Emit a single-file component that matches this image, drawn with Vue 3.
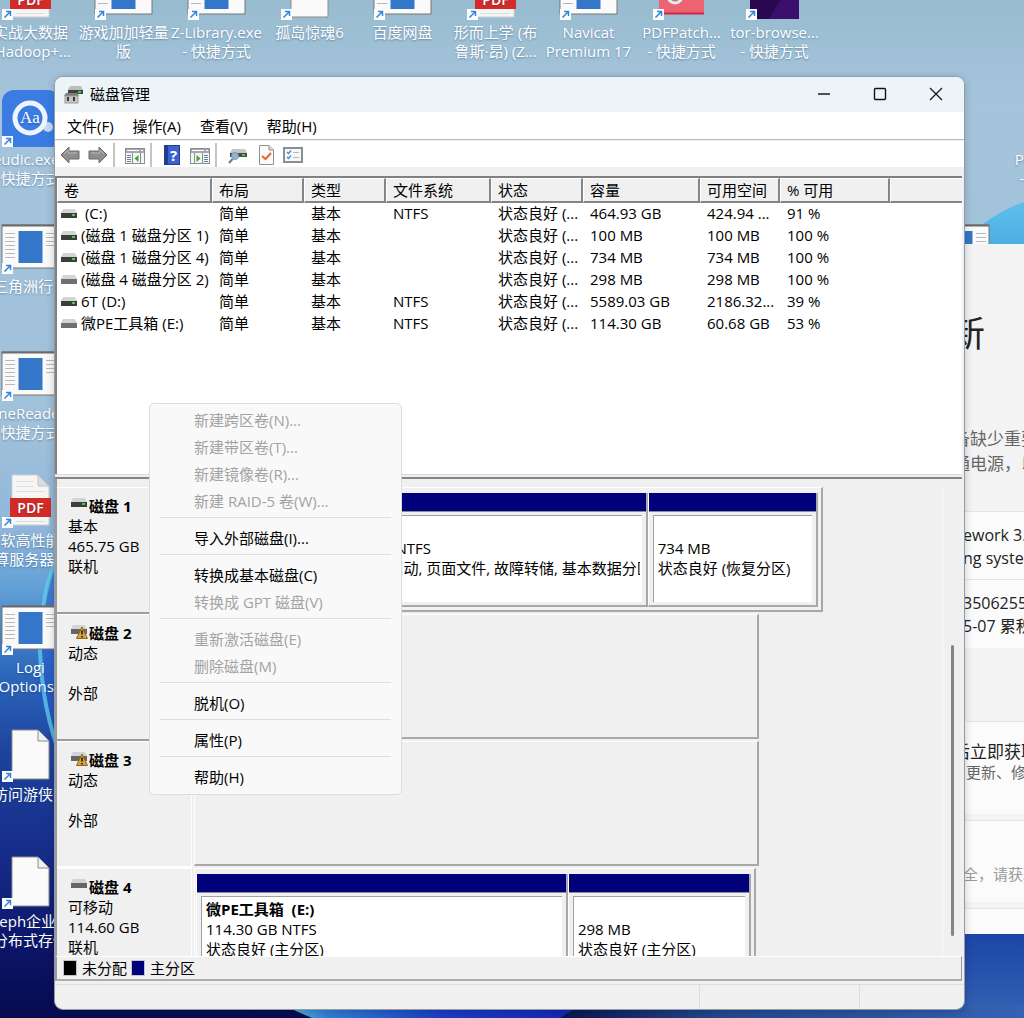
<template>
  <div class="desktop">
    <svg class="wallpaper" viewBox="0 0 1024 1018" preserveAspectRatio="none" aria-hidden="true">
      <defs>
        <linearGradient id="sky" x1="0" y1="0" x2="0" y2="1">
          <stop offset="0" stop-color="#98bccf" />
          <stop offset="0.1" stop-color="#a5c4dc" />
          <stop offset="0.42" stop-color="#a0c1da" />
          <stop offset="0.52" stop-color="#8fb6da" />
          <stop offset="0.58" stop-color="#5f9ed6" />
          <stop offset="0.66" stop-color="#2d68bb" />
          <stop offset="0.74" stop-color="#1c439e" />
          <stop offset="0.85" stop-color="#152a86" />
          <stop offset="0.93" stop-color="#0c1568" />
          <stop offset="1" stop-color="#060b4e" />
        </linearGradient>
        <linearGradient id="bloom" x1="0" y1="0" x2="0" y2="1">
          <stop offset="0" stop-color="#5cc0ea" />
          <stop offset="0.1" stop-color="#3f9ddd" />
          <stop offset="0.9" stop-color="#1c46a8" />
          <stop offset="1" stop-color="#3562b4" />
        </linearGradient>
        <linearGradient id="floor" x1="0" y1="0" x2="1" y2="0">
          <stop offset="0" stop-color="#5cc5e6" />
          <stop offset="0.15" stop-color="#2f7fd6" />
          <stop offset="0.5" stop-color="#1b3fc4" />
          <stop offset="1" stop-color="#1422b4" />
        </linearGradient>
        <linearGradient id="corner" x1="0" y1="0" x2="1" y2="0">
          <stop offset="0" stop-color="#0b1550" />
          <stop offset="0.35" stop-color="#234a90" />
          <stop offset="1" stop-color="#3562b4" />
        </linearGradient>
      </defs>
      <rect width="1024" height="1018" fill="url(#sky)" />
      <path d="M940 262 Q985 215 1024 202 V1018 H940 Z" fill="url(#bloom)" />
      <path d="M36 690 L44 600 L55 560 V740 Z" fill="#2456cc" opacity="0.5" />
      <path d="M62 545 Q40 590 40 650 Q42 710 62 760" fill="none" stroke="#62d2ea" stroke-width="4" opacity="0.75" />
      <path d="M280 1004 H600 L570 1018 H312 Z" fill="url(#floor)" />
      <path d="M582 1004 H1024 V1018 H560 Z" fill="url(#corner)" />
    </svg>

    <div class="shortcuts">
      <a
        v-for="item in shortcuts"
        :key="item.id"
        href="#"
        class="shortcut"
        :style="{ gridColumn: item.col, gridRow: item.row }"
      >
        <svg class="shortcut-icon" viewBox="0 0 59 60" aria-hidden="true">
          <g v-if="item.icon === 'app'">
            <rect x="1" y="11" width="57" height="43" fill="#fafafa" stroke="#777" />
            <path d="M1 11.5 H58" stroke="#6b6b6b" stroke-width="2" />
            <rect x="17.500" y="17" width="24" height="32" fill="#3476c8" />
            <path
              d="M4 19.500H14M4 23.500H14M4 27.500H14M4 31.500H14M4 35.500H14M4 39.500H14M4 43.500H14M45 19.500H55M45 23.500H55M45 27.500H55M45 31.500H55"
              stroke="#b9b9b9"
            />
          </g>
          <g v-else-if="item.icon === 'pdf'">
            <path d="M11 7 H37 L48 18 V57 H11 Z" fill="#f6f6f6" stroke="#cfcfcf" />
            <path d="M37 7 V18 H48 Z" fill="#dcdcdc" stroke="#c4c4c4" />
            <path d="M15 13.500H33M15 18.500H33M15 23.500H44M15 53.500H44" stroke="#dedede" />
            <rect x="9" y="30" width="41" height="19" fill="#d52b27" />
            <text x="29.500" y="45" text-anchor="middle" class="pdf-text">PDF</text>
          </g>
          <g v-else-if="item.icon === 'file'">
            <path d="M11 8 H37 L48 19 V57 H11 Z" fill="#fafafa" stroke="#8d8d8d" />
            <path d="M37 8 V19 H48" fill="#f0f0f0" stroke="#8d8d8d" />
          </g>
          <g v-else-if="item.icon === 'dict'">
            <rect x="1" y="3" width="58" height="58" rx="12" fill="#3a7ce2" />
            <path d="M40 36 L47 40" stroke="#d3e4fb" stroke-width="7" />
            <circle cx="47" cy="40" r="5" fill="#c3daf8" />
            <circle cx="29" cy="31" r="15" fill="#3a7ce2" stroke="#eef5ff" stroke-width="5" />
            <text x="29" y="36" text-anchor="middle" class="dict-text">Aa</text>
          </g>
          <g v-else-if="item.icon === 'patch'">
            <rect x="7" y="8" width="45" height="46" rx="2" fill="#ee6372" />
            <path d="M7 53.500 H52" stroke="#cc2743" stroke-width="2" />
            <circle cx="23" cy="36" r="7" fill="none" stroke="#d9f2f4" stroke-width="3" />
          </g>
          <g v-else>
            <rect x="5" y="8" width="49" height="51" fill="#2a0850" />
            <path d="M54 8 V59 H24 Z" fill="#3a0f6c" />
          </g>
          <rect x="1" y="49" width="11" height="11" fill="#fdfdfd" />
          <path d="M3.500 57.500 L9 52 M5 51.500 H9.500 V56" fill="none" stroke="#2f86dc" stroke-width="1.500" />
        </svg>
        <span v-for="line in item.lines" :key="line" class="shortcut-line">{{ line }}</span>
      </a>
    </div>

    <section class="update-window">
      <h2>新</h2>
      <div class="update-notice">
        <p>备缺少重要更新。</p>
        <p>通电源，以便继续</p>
      </div>
      <div class="update-card first">
        <p>ework 3.5</p>
        <p>ng system</p>
      </div>
      <div class="update-card second">
        <p>3506255)</p>
        <p>5-07 累积更新</p>
      </div>
      <div class="update-card third">
        <h3>后立即获取</h3>
        <p class="muted">更新、修复</p>
      </div>
      <div class="update-card fourth">
        <p class="faint">全，请获取</p>
      </div>
      <div class="update-card rest"></div>
    </section>

    <main class="window">
      <header class="title-bar">
        <svg class="title-icon" viewBox="0 0 20 20" aria-hidden="true">
          <path d="M6 2 H17 L19 6 H4 Z" fill="#bdbdbd" />
          <rect x="4" y="6" width="15" height="4" fill="#3c4240" />
          <rect x="14" y="7" width="3" height="2" fill="#3fd13f" />
          <path d="M2 9 H13 L15 12 H0 Z" fill="#7d7d7d" />
          <rect x="1" y="12" width="13" height="7" fill="#c4c4c4" stroke="#9a9a9a" />
          <rect x="3" y="13" width="2" height="4" fill="#3a3a3a" />
          <rect x="9" y="13" width="2" height="4" fill="#3a3a3a" />
        </svg>
        <h1>磁盘管理</h1>
        <button class="caption" aria-label="最小化">
          <svg viewBox="0 0 14 14"><path d="M1 7 H13" stroke="#1a1a1a" stroke-width="1.300" /></svg>
        </button>
        <button class="caption" aria-label="最大化">
          <svg viewBox="0 0 14 14"><rect x="1.500" y="1.500" width="11" height="11" rx="1" fill="none" stroke="#111" stroke-width="1.400" /></svg>
        </button>
        <button class="caption" aria-label="关闭">
          <svg viewBox="0 0 14 14"><path d="M1 1 L13 13 M13 1 L1 13" stroke="#1a1a1a" stroke-width="1.300" /></svg>
        </button>
      </header>

      <nav class="menu-bar">
        <button v-for="name in menus" :key="name">{{ name }}</button>
      </nav>

      <div class="toolbar">
        <button aria-label="后退">
          <svg viewBox="0 0 20 20"><path d="M1 10 L9 2 V6 H19 V14 H9 V18 Z" fill="#8e8e8e" stroke="#6a6a6a" /><path d="M4 9 L8 5 V8 H17" fill="none" stroke="#b5b5b5" /></svg>
        </button>
        <button aria-label="前进">
          <svg viewBox="0 0 20 20"><path d="M19 10 L11 2 V6 H1 V14 H11 V18 Z" fill="#8e8e8e" stroke="#6a6a6a" /><path d="M16 9 L12 5 V8 H3" fill="none" stroke="#b5b5b5" /></svg>
        </button>
        <span class="divider"></span>
        <button aria-label="显示树">
          <svg viewBox="0 0 20 20">
            <rect x="0.500" y="3.500" width="19" height="15" fill="#f5f5f5" stroke="#8a8f96" />
            <rect x="1" y="4" width="18" height="4" fill="#a3a8ae" />
            <path d="M2 5.500H14M16 5.500H18" stroke="#fff" />
            <path d="M7.500 8V18M15.500 8V18" stroke="#8a8f96" />
            <path d="M2 10.500H6M2 12.500H6M2 14.500H6M2 16.500H6" stroke="#5f82ad" />
            <path d="M13.500 10 V17 L9.500 13.500 Z" fill="#43a52c" />
          </svg>
        </button>
        <span class="divider"></span>
        <button aria-label="帮助">
          <svg viewBox="0 0 20 20">
            <rect x="2.500" y="0.500" width="15" height="19" fill="#3d62cf" stroke="#27407f" />
            <rect x="3" y="1" width="3" height="18" fill="#223c94" />
            <text x="11.500" y="16" text-anchor="middle" class="help-mark">?</text>
          </svg>
        </button>
        <button aria-label="操作窗格">
          <svg viewBox="0 0 20 20">
            <rect x="0.500" y="3.500" width="19" height="15" fill="#f5f5f5" stroke="#8a8f96" />
            <rect x="1" y="4" width="18" height="4" fill="#a3a8ae" />
            <path d="M2 5.500H14M16 5.500H18" stroke="#fff" />
            <path d="M4.500 8V18M12.500 8V18" stroke="#8a8f96" />
            <path d="M14 10.500H18M14 12.500H18M14 14.500H18M14 16.500H18" stroke="#5f82ad" />
            <path d="M6.500 10 V17 L10.500 13.500 Z" fill="#43a52c" />
          </svg>
        </button>
        <span class="divider"></span>
        <button aria-label="重新扫描磁盘">
          <svg viewBox="0 0 20 20">
            <path d="M5 4 H18 L20 8 H3 Z" fill="#c6c6c6" />
            <rect x="3" y="8" width="17" height="4" fill="#454c4a" />
            <rect x="15" y="9" width="3" height="2" fill="#3fd13f" />
            <circle cx="8" cy="11" r="3.500" fill="#8fb6d4" stroke="#7d97ab" />
            <path d="M5.500 14 L2 18" stroke="#6f7a84" stroke-width="2" />
          </svg>
        </button>
        <button aria-label="属性">
          <svg viewBox="0 0 20 20">
            <path d="M4.500 0.500 H14 L18.500 5 V19.500 H4.500 Z" fill="#fbfbfb" stroke="#8f8f8f" />
            <path d="M14 0.500 V5 H18.500" fill="#ddd" stroke="#8f8f8f" />
            <path d="M7 11 L10.500 14 L16 8" fill="none" stroke="#e8672a" stroke-width="2" />
          </svg>
        </button>
        <button aria-label="设置">
          <svg viewBox="0 0 20 20">
            <rect x="1" y="3" width="18" height="14" fill="#f7f7f7" stroke="#8a8f96" stroke-width="2" />
            <path d="M4 7 L5.500 8.500 L8 5.500 M4 12 L5.500 13.500 L8 10.500" fill="none" stroke="#3d8ad0" stroke-width="1.300" />
            <path d="M10 7.500H16M10 12.500H16" stroke="#b4b9bf" />
          </svg>
        </button>
      </div>

      <div class="volume-pane">
        <table>
          <colgroup>
            <col v-for="(col, i) in columns" :key="i" :class="'col-' + i">
            <col>
          </colgroup>
          <thead>
            <tr>
              <th v-for="col in columns" :key="col">{{ col }}</th>
              <th></th>
            </tr>
          </thead>
          <tbody>
            <tr v-for="vol in volumes" :key="vol.cells[0]">
              <td v-for="(cell, i) in vol.cells" :key="i" :class="{ name: i === 0 }">
                <svg v-if="i === 0" class="drive" viewBox="0 0 16 10" aria-hidden="true">
                  <path d="M2 0 H14 L16 4 H0 Z" fill="#d2d4d6" />
                  <rect y="4" width="16" height="5" :fill="vol.removable ? '#707070' : '#3a3f3d'" />
                  <rect v-if="!vol.removable" x="11" y="5" width="3" height="2" fill="#3fd13f" />
                </svg>{{ cell }}
              </td>
              <td></td>
            </tr>
          </tbody>
        </table>
      </div>

      <div class="splitter"></div>

      <div class="disk-pane">
        <div class="disk-list">
          <div v-for="disk in disks" :key="disk.name" class="disk-row">
            <div class="disk-head">
              <strong>
                <svg class="drive" viewBox="0 0 16 14" aria-hidden="true">
                  <path d="M2 0 H14 L16 4 H0 Z" fill="#d2d4d6" />
                  <rect y="4" width="16" height="5" :fill="disk.kind === 'fixed' ? '#3a3f3d' : '#666'" />
                  <rect v-if="disk.kind === 'fixed'" x="11" y="5" width="3" height="2" fill="#3fd13f" />
                  <g v-if="disk.kind === 'foreign'">
                    <path d="M11 2 L16.500 13.500 H5.500 Z" fill="#dba23c" stroke="#8f641c" />
                    <path d="M11 5.500 V9.500 M11 11 V12.500" stroke="#1c1200" stroke-width="1.500" />
                  </g>
                </svg>{{ disk.name }}
              </strong>
              <span v-for="(line, i) in disk.info" :key="i">{{ line }}</span>
            </div>
            <div class="disk-graph" :style="{ width: disk.width + 'px' }">
              <div
                v-for="(part, i) in disk.parts"
                :key="i"
                class="partition"
                :style="{ flexGrow: part.share }"
              >
                <div class="bar"></div>
                <div class="partition-body">
                  <strong>{{ part.label }}</strong>
                  <span>{{ part.size }}</span>
                  <span>{{ part.status }}</span>
                </div>
              </div>
            </div>
          </div>
        </div>
        <div class="scroll-track"><div class="scroll-thumb"></div></div>
      </div>

      <div class="legend">
        <span class="swatch unallocated"></span>未分配
        <span class="swatch primary"></span>主分区
      </div>
      <footer class="status-bar">
        <span></span><span></span><span></span>
      </footer>
    </main>

    <div class="context-menu" role="menu">
      <template v-for="(group, g) in contextMenu" :key="g">
        <hr v-if="g > 0">
        <button v-for="item in group" :key="item.text" role="menuitem" :disabled="item.disabled">
          {{ item.text }}
        </button>
      </template>
    </div>
  </div>
</template>

<script setup>
const shortcuts = [
  { id: 1, col: 1, row: 1, icon: 'pdf', lines: ['实战大数据', '(Hadoop+...'] },
  { id: 2, col: 2, row: 1, icon: 'app', lines: ['游戏加加轻量', '版'] },
  { id: 3, col: 3, row: 1, icon: 'app', lines: ['Z-Library.exe', '- 快捷方式'] },
  { id: 4, col: 4, row: 1, icon: 'file', lines: ['孤岛惊魂6'] },
  { id: 5, col: 5, row: 1, icon: 'app', lines: ['百度网盘'] },
  { id: 6, col: 6, row: 1, icon: 'pdf', lines: ['形而上学 (布', '鲁斯·昂) (Z...'] },
  { id: 7, col: 7, row: 1, icon: 'app', lines: ['Navicat', 'Premium 17'] },
  { id: 8, col: 8, row: 1, icon: 'patch', lines: ['PDFPatch...', '- 快捷方式'] },
  { id: 9, col: 9, row: 1, icon: 'tor', lines: ['tor-browse...', '- 快捷方式'] },
  { id: 10, col: 1, row: 2, icon: 'dict', lines: ['eudic.exe -', '快捷方式'] },
  { id: 11, col: 1, row: 3, icon: 'app', lines: ['三角洲行动'] },
  { id: 12, col: 1, row: 4, icon: 'app', lines: ['OneReader -', '快捷方式'] },
  { id: 13, col: 1, row: 5, icon: 'pdf', lines: ['微软高性能计', '算服务器 2'] },
  { id: 14, col: 1, row: 6, icon: 'app', lines: ['Logi', 'Options+'] },
  { id: 15, col: 1, row: 7, icon: 'file', lines: ['访问游侠网'] },
  { id: 16, col: 1, row: 8, icon: 'file', lines: ['Ceph企业级', '分布式存储'] },
  { id: 17, col: 12, row: 2, icon: 'file', lines: ['Person.exe', '- 快捷方式'] },
  { id: 18, col: 11, row: 3, icon: 'app', lines: [] }
]

const menus = ['文件(F)', '操作(A)', '查看(V)', '帮助(H)']

const columns = ['卷', '布局', '类型', '文件系统', '状态', '容量', '可用空间', '% 可用']

const volumes = [
  { cells: [' (C:)', '简单', '基本', 'NTFS', '状态良好 (...', '464.93 GB', '424.94 ...', '91 %'] },
  { cells: ['(磁盘 1 磁盘分区 1)', '简单', '基本', '', '状态良好 (...', '100 MB', '100 MB', '100 %'] },
  { cells: ['(磁盘 1 磁盘分区 4)', '简单', '基本', '', '状态良好 (...', '734 MB', '734 MB', '100 %'] },
  { removable: true, cells: ['(磁盘 4 磁盘分区 2)', '简单', '基本', '', '状态良好 (...', '298 MB', '298 MB', '100 %'] },
  { cells: ['6T (D:)', '简单', '基本', 'NTFS', '状态良好 (...', '5589.03 GB', '2186.32...', '39 %'] },
  { removable: true, cells: ['微PE工具箱 (E:)', '简单', '基本', 'NTFS', '状态良好 (...', '114.30 GB', '60.68 GB', '53 %'] }
]

const disks = [
  {
    name: '磁盘 1',
    kind: 'fixed',
    info: ['基本', '465.75 GB', '联机'],
    width: 629,
    parts: [
      { share: 113, label: '', size: '100 MB', status: '状态良好' },
      { share: 340, label: '(C:)', size: '464.93 GB NTFS', status: '状态良好 (启动, 页面文件, 故障转储, 基本数据分区)' },
      { share: 170, label: '', size: '734 MB', status: '状态良好 (恢复分区)' }
    ]
  },
  { name: '磁盘 2', kind: 'foreign', info: ['动态', '', '外部'], width: 565, parts: [] },
  { name: '磁盘 3', kind: 'foreign', info: ['动态', '', '外部'], width: 565, parts: [] },
  {
    name: '磁盘 4',
    kind: 'removable',
    info: ['可移动', '114.60 GB', '联机'],
    width: 562,
    parts: [
      { share: 373, label: '微PE工具箱  (E:)', size: '114.30 GB NTFS', status: '状态良好 (主分区)' },
      { share: 182, label: '', size: '298 MB', status: '状态良好 (主分区)' }
    ]
  }
]

const contextMenu = [
  [
    { text: '新建跨区卷(N)...', disabled: true },
    { text: '新建带区卷(T)...', disabled: true },
    { text: '新建镜像卷(R)...', disabled: true },
    { text: '新建 RAID-5 卷(W)...', disabled: true }
  ],
  [{ text: '导入外部磁盘(I)...' }],
  [{ text: '转换成基本磁盘(C)' }, { text: '转换成 GPT 磁盘(V)', disabled: true }],
  [{ text: '重新激活磁盘(E)', disabled: true }, { text: '删除磁盘(M)', disabled: true }],
  [{ text: '脱机(O)' }],
  [{ text: '属性(P)' }],
  [{ text: '帮助(H)' }]
]
</script>

<style>
body {
  margin: 0;
  overflow: hidden;
}
</style>

<style scoped>
.desktop {
  position: relative;
  height: 100vh;
  overflow: hidden;
  font-family: "Open Sans", "Noto Sans CJK SC", sans-serif;
  font-size: 15px;
  line-height: 20px;
  color: #000;
}

button {
  border: 0;
  padding: 0;
  background: none;
  font: inherit;
  color: inherit;
}

h1,
h2,
h3,
p {
  margin: 0;
  font-weight: 400;
}

.wallpaper {
  position: absolute;
  width: 100%;
  height: 100%;
}

/* desktop shortcuts */
.shortcuts {
  position: relative;
  display: grid;
  grid-template-columns: repeat(12, 93px);
  grid-auto-rows: 127px;
  margin: -40px 0 0 -16px;
}

.shortcut {
  display: flex;
  flex-direction: column;
  align-items: center;
  color: #fff;
  text-decoration: none;
  text-shadow: 0 1px 2px rgba(20, 50, 90, 0.4);
}

.shortcut-icon {
  width: 59px;
  height: 60px;
  margin-bottom: 3px;
}

.shortcut-line {
  line-height: 19px;
  white-space: nowrap;
}

.pdf-text {
  font-size: 14px;
  font-weight: 600;
  fill: #fff;
}

.dict-text {
  font-family: "Liberation Serif", serif;
  font-size: 17px;
  fill: #fff;
}

/* update window behind */
.update-window {
  position: absolute;
  top: 244px;
  left: 949px;
  right: 0;
  height: 690px;
  display: flex;
  flex-direction: column;
  box-sizing: border-box;
  background: #f3f3f3;
  color: #222;
  white-space: nowrap;
  overflow: hidden;
}

.update-window h2 {
  margin-top: 66px;
  font-size: 36px;
  line-height: 48px;
}

.update-notice {
  flex: 1;
  margin-top: 68px;
  padding-left: 4px;
  font-size: 17px;
  line-height: 25px;
  color: #666;
}

.update-card {
  box-sizing: border-box;
  padding-left: 14px;
  background: #fbfbfb;
  border-top: 1px solid #e5e5e5;
  font-size: 16px;
  line-height: 23px;
}

.first {
  height: 68px;
  padding-top: 12px;
}

.second {
  height: 69px;
  padding-top: 12px;
}

.third {
  height: 93px;
  margin-top: 73px;
  padding: 18px 0 0 4px;
}

.third h3 {
  font-size: 17px;
}

.fourth {
  height: 82px;
  margin-top: 6px;
  padding-top: 42px;
}

.rest {
  height: 26px;
  margin-top: 6px;
}

.muted {
  padding-left: 13px;
  font-size: 15px;
  line-height: 18px;
  color: #666;
}

.faint {
  font-size: 15px;
  color: #999;
}

/* main window */
.window {
  position: absolute;
  top: 76px;
  left: 54px;
  right: 59px;
  bottom: 8px;
  display: flex;
  flex-direction: column;
  box-sizing: border-box;
  border: 1px solid #8f9dab;
  border-radius: 9px;
  background: #f0f0f0;
  box-shadow: 0 2px 8px rgba(0, 0, 0, 0.2);
  overflow: hidden;
}

.title-bar {
  display: flex;
  align-items: center;
  height: 35px;
  padding: 0 0 2px 9px;
  box-sizing: border-box;
  background: #edf4f8;
}

.title-icon {
  width: 20px;
  height: 20px;
}

.title-bar h1 {
  flex: 1;
  margin-left: 6px;
  font-size: 15px;
}

.caption {
  display: flex;
  align-items: center;
  justify-content: center;
  width: 56px;
  height: 33px;
}

.caption svg {
  width: 14px;
  height: 14px;
}

.menu-bar {
  display: flex;
  gap: 1px;
  height: 27px;
  padding-left: 3px;
  background: #fff;
  border-bottom: 1px solid #b9b9b9;
}

.menu-bar button {
  padding: 0 9px;
}

.toolbar {
  display: flex;
  align-items: center;
  height: 27px;
  padding: 3px 0 1px 1px;
  margin-bottom: 9px;
  box-sizing: border-box;
  border-top: 1px solid #f0f0f0;
  background: #fff;
}

.toolbar button {
  width: 20px;
  height: 20px;
  margin: 0 4px;
}

.toolbar svg {
  display: block;
  width: 20px;
  height: 20px;
}

.help-mark {
  font-size: 15px;
  font-weight: 700;
  fill: #fff;
}

.divider {
  width: 2px;
  height: 24px;
  margin: 0 6px 0 1px;
  background: #c4c4c4;
}

.volume-pane {
  flex: 12 1 0;
  margin-right: 2px;
  border-top: 2px solid #808080;
  border-left: 2px solid #808080;
  box-sizing: border-box;
  background: #fff;
  overflow: hidden;
}

table {
  width: 100%;
  table-layout: fixed;
  border-collapse: separate;
  border-spacing: 0;
}

.col-0 {
  width: 155px;
}

.col-1,
.col-4 {
  width: 92px;
}

.col-2 {
  width: 82px;
}

.col-3 {
  width: 105px;
}

.col-5 {
  width: 117px;
}

.col-6 {
  width: 80px;
}

.col-7 {
  width: 110px;
}

th {
  height: 22px;
  padding: 0 0 0 6px;
  border-left: 1px solid #fff;
  border-top: 1px solid #fff;
  border-right: 2px solid #858585;
  border-bottom: 2px solid #858585;
  background: #f0f0f0;
  font-weight: 400;
  text-align: left;
  white-space: nowrap;
}

th:last-child {
  border-right: 0;
}

td {
  height: 20px;
  padding: 0 0 2px 7px;
  line-height: 20px;
  vertical-align: top;
  white-space: pre;
}

td.name {
  padding-left: 4px;
}

.drive {
  width: 16px;
  height: 10px;
  margin-right: 4px;
  overflow: visible;
}

.splitter {
  height: 5px;
  box-sizing: border-box;
  margin-right: 2px;
  border-top: 1px solid #dcdcdc;
  border-bottom: 2px solid #858585;
}

.disk-pane {
  flex: 19 1 0;
  display: flex;
  min-height: 0;
  margin-right: 2px;
  padding-top: 8px;
  box-sizing: border-box;
  border-left: 2px solid #9a9a9a;
  overflow: hidden;
}

.disk-list {
  flex: 1;
  min-width: 0;
  border-right: 1px solid #f8f8f8;
}

.disk-row {
  display: flex;
  height: 127px;
}

.disk-head {
  display: flex;
  flex-direction: column;
  width: 135px;
  padding: 8px 0 0 11px;
  margin-right: 2px;
  box-sizing: border-box;
  border-top: 1px solid #fff;
  border-right: 1px solid #fff;
  border-bottom: 2px solid #9d9d9d;
}

.disk-row:nth-child(3) .disk-head {
  border-bottom-color: #fff;
}

.disk-head strong {
  padding-left: 3px;
}

.disk-head .drive {
  height: 14px;
  margin-right: 2px;
}

.disk-head span {
  min-height: 20px;
}

.disk-graph {
  display: flex;
  height: 125px;
  padding: 5px 3px 3px 1px;
  box-sizing: border-box;
  border-top: 1px solid #fff;
  border-left: 1px solid #fff;
  border-right: 2px solid #a8a8a8;
  border-bottom: 2px solid #a8a8a8;
}

.partition {
  flex: 1 1 0;
  display: flex;
  flex-direction: column;
  min-width: 0;
  box-sizing: border-box;
  border-left: 1px solid #fff;
  border-right: 2px solid #a8a8a8;
  border-bottom: 2px solid #a8a8a8;
}

.bar {
  height: 18px;
  background: #00007b;
  border-bottom: 1px solid #8d8d8d;
}

.partition-body {
  flex: 1;
  display: flex;
  flex-direction: column;
  margin: 3px 4px;
  padding: 2px 2px 2px 4px;
  border-top: 1px solid #a0a0a0;
  border-left: 1px solid #a0a0a0;
  background: #fff;
  overflow: hidden;
}

.partition-body strong,
.partition-body span {
  min-height: 20px;
  white-space: pre;
  overflow: hidden;
}

.scroll-track {
  display: flex;
  width: 19px;
  padding: 158px 0 20px 8px;
  box-sizing: border-box;
}

.scroll-thumb {
  width: 3px;
  border-radius: 2px;
  background: #858585;
}

.legend {
  display: flex;
  align-items: center;
  height: 25px;
  margin-right: 2px;
  padding-left: 6px;
  box-sizing: border-box;
  border-top: 1px solid #fff;
  border-left: 2px solid #9a9a9a;
  border-right: 1px solid #9a9a9a;
  border-bottom: 2px solid #adadad;
}

.swatch {
  width: 12px;
  height: 14px;
  margin-right: 5px;
  border: 1px solid #c4c4c4;
}

.unallocated {
  background: #000;
}

.primary {
  margin-left: 4px;
  background: #00007b;
}

.status-bar {
  display: flex;
  height: 28px;
  padding-top: 3px;
  box-sizing: border-box;
}

.status-bar span {
  flex: 0 0 104px;
  border-top: 1px solid #dedede;
}

.status-bar span:first-child {
  flex: 1;
}

.status-bar span:nth-child(2) {
  flex-basis: 159px;
  border-left: 1px solid #dedede;
  border-right: 1px solid #dedede;
}

/* context menu */
.context-menu {
  position: absolute;
  top: 403px;
  left: 149px;
  width: 253px;
  padding: 3px 0;
  box-sizing: border-box;
  display: flex;
  flex-direction: column;
  background: #f9f9f9;
  border: 1px solid #dcdcdc;
  border-radius: 5px;
}

.context-menu button {
  padding-left: 44px;
  line-height: 27px;
  text-align: left;
}

.context-menu button:disabled {
  color: #a3a3a3;
}

.context-menu hr {
  width: auto;
  height: 1px;
  margin: 2px 10px 7px;
  border: 0;
  background: #dfdfdf;
}
</style>
